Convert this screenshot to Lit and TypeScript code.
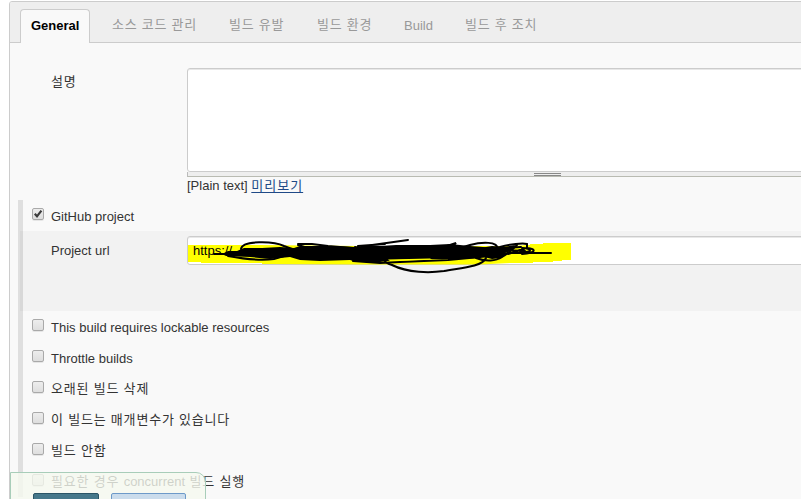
import { LitElement, html, css, svg } from "lit";
import { customElement, property } from "lit/decorators.js";

@customElement("check-row")
class CheckRow extends LitElement {
  @property() label = "";
  @property({ type: Boolean }) checked = false;

  static styles = css`
    :host { display: flex; height: 31px; padding-left: 14px; box-sizing: border-box; }
    .box {
      width: 12px; height: 12px; box-sizing: border-box; flex: none; margin-top: 8px;
      border: 1px solid #a9a9a9; border-radius: 2px;
      background: linear-gradient(#ededed, #dedede);
      box-shadow: 0 1px 0 rgba(0, 0, 0, 0.08);
    }
    .box svg { display: block; width: 10px; height: 10px; overflow: visible; }
    .label { margin-left: 7px; line-height: 34px; white-space: pre; }
    .label.mixed { line-height: 32px; }
    .ko { letter-spacing: 0.8px; }
  `;

  render() {
    const parts = this.label.split(/([A-Za-z]+(?: [A-Za-z]+)*)/).filter((p) => p);
    const mixed = /[가-힣]/.test(this.label);
    return html`<span class="box">${this.checked
        ? html`<svg viewBox="0 0 10 10"><path d="M1.8 4.8 L4 7.3 L8.4 1.6" fill="none" stroke="#3c3c3c" stroke-width="2.2"/></svg>`
        : ""}</span>
      <span class="label ${mixed ? "mixed" : ""}">${parts.map((p) => html`<span class="${/[A-Za-z]/.test(p) ? "" : "ko"}">${p}</span>`)}</span>`;
  }
}

@customElement("app-root")
class AppRoot extends LitElement {
  static styles = css`
    :host {
      display: block; position: relative; width: 801px; height: 499px; overflow: hidden;
      box-sizing: border-box; padding: 1px 0 0 9px; background: #fff; color: #333;
      font: 13px "Liberation Sans", "Noto Sans CJK KR", sans-serif;
    }
    .panel {
      width: 820px; height: 520px; box-sizing: border-box; background: #f9f9f9;
      border: 1px solid #ccc; border-radius: 3px 0 0 0; overflow: hidden;
    }
    .tabs {
      display: flex; height: 41px; box-sizing: border-box; padding: 7px 0 0 10px;
      background: #eee; border-bottom: 1px solid #ccc;
    }
    .tab { height: 33px; line-height: 32px; color: #999; white-space: nowrap; flex: none; box-sizing: border-box; }
    .tab.active {
      width: 70px; height: 34px; padding-left: 10px; color: #000; font-weight: bold; line-height: 31px;
      background: #f9f9f9; border: 1px solid #ccc; border-bottom: 0; border-radius: 4px 4px 0 0; margin-right: 22px;
    }
    .ko { letter-spacing: 0.75px; }
    .t1 { width: 117px; } .t2 { width: 88px; } .t3 { width: 87px; } .t4 { width: 61px; line-height: 33px; }
    .field { display: flex; }
    .desc { height: 157px; padding-top: 25px; box-sizing: border-box; }
    .name { width: 136px; flex: none; white-space: nowrap; }
    .desc .name { margin-left: 41px; line-height: 27px; }
    .area { width: 640px; flex: none; }
    .text { height: 104px; box-sizing: border-box; border: 1px solid #ccc; border-radius: 3px; background: #fff; box-shadow: inset 0 1px 0 #e8e8e8; }
    .grip {
      height: 5px; box-sizing: border-box; background: #eee; border-bottom: 1px solid #b9bbb2; border-left: 1px solid #bbb;
      padding: 1px 0 0 346px;
    }
    .grip i { display: block; width: 27px; height: 3px; box-sizing: border-box; border: solid #888; border-width: 1px 0; }
    .hint { line-height: 18px; white-space: nowrap; }
    .link { color: #204a87; text-decoration: underline; text-underline-offset: 2px; letter-spacing: 1px; }
    .group { margin-left: 8px; height: 297px; box-sizing: border-box; border-left: 5px solid #dfdfdf; }
    .group check-row { padding-left: 9px; }
    .project { height: 80px; padding: 5px 0 0 31px; margin-left: -3px; box-sizing: border-box; background: rgba(0, 0, 0, 0.028); }
    .project .name { line-height: 29px; }
    .input {
      position: relative; width: 640px; height: 29px; box-sizing: border-box; flex: none; border: 1px solid #ccc; border-radius: 3px;
      background: #fff; box-shadow: inset 0 1px 0 #e8e8e8; color: #000; line-height: 28px; padding-left: 5px;
    }
    .marks { position: absolute; left: -8px; top: -7px; width: 400px; height: 50px; }
    .url { position: relative; }
    .actions {
      position: absolute; left: 10px; top: 472px; width: 196px; height: 40px; box-sizing: border-box;
      border: 1px solid #a8cdb9; border-radius: 0 10px 0 0; background: rgba(245, 249, 239, 0.8);
      display: flex; gap: 12px; padding: 20px 0 0 22px;
    }
    .btn { width: 66px; height: 30px; box-sizing: border-box; border: 1px solid #2b5566; border-radius: 2px; background: #46788a; }
    .btn.alt { width: 75px; border-color: #6d9ac9; background: #cadcec; }
  `;

  private ink = svg`
    <path fill="#ff0" d="M8 15 H80 L180 16 L330 16 L350 15 V14 H363 V13 H391 V30 H382 V31 H373 V32 H353 V33 H330 L300 34.5 H180 L82 34 V33 H21 V32 H8 Z"/>`;

  private scribble = svg`
    <path d="M42 24 L48 21 L57 21 L64 18 L82 18 L100 17 L114 18 L120 16 L135 16 L156 16 L175 17 L188 15 L200 16 L216 15 L238 15 L250 15 L270 14 L290 16 L303 17 L312 18 L310 27 L300 28 L280 29 L250 29 L215 30 L200 32 L176 32 L170 30 L140 31 L120 30 L110 27 L100 28 L90 29 L70 27 L46 26 Z"/>
    <path d="M300 18 L312 16 L324 17 L335 15 L333 20 L325 23 L322 28 L312 29 L304 27 Z"/>
    <g fill="none" stroke="#000" stroke-width="2" stroke-linecap="round">
      <path d="M61 19 C62 10 94 11 104 16 L112 19 M34 24 H44 M48 26 C64 29 80 31 94 29 L104 26"/>
      <path d="M118 14 L132 14 L148 16 L172 18 M118 15 L128 18 M186 20 L175 17 M185 16 L228 10 M205 14 L178 16"/>
      <path d="M203 28 C204 31 208 34 212 35 C228 43 250 43 264 41 C280 38 302 37 306 28"/>
      <path d="M267 16 L276 13 L271 18 M262 18 L275 14 M280 18 L290 15 C301 12 319 11 317 19"/>
      <path d="M308 20 L320 17 C330 14 343 13 347 14 V18 C357 19 356 23 342 24 M342 18 C352 18 354 23 340 22"/>
      <path d="M296 28 C306 32 316 31 322 27 C329 23 334 18 337 15 M318 24 L331 23 H371"/>
      <path d="M323 20 L345 21 M325 18 L341 17 M328 24 L344 19"/>
      <path d="M173 31 L200 33 L220 32 L268 30 L300 27"/>
    </g>
    <path d="M208 29.5 L250 28.5 L252 29.5 L210 31 Z" fill="#ff0"/>`;

  render() {
    return html`
      <div class="panel">
        <div class="tabs">
          <div class="tab active">General</div>
          <div class="tab ko t1">소스 코드 관리</div>
          <div class="tab ko t2">빌드 유발</div>
          <div class="tab ko t3">빌드 환경</div>
          <div class="tab t4">Build</div>
          <div class="tab ko">빌드 후 조치</div>
        </div>
        <div class="field desc">
          <div class="name ko">설명</div>
          <div class="area">
            <div class="text"></div>
            <div class="grip"><i></i></div>
            <div class="hint">[Plain text] <span class="link">미리보기</span></div>
          </div>
        </div>
        <div class="group">
          <check-row label="GitHub project" checked></check-row>
          <div class="field project">
            <div class="name">Project url</div>
            <div class="input">
              <svg class="marks" viewBox="0 0 400 50">${this.ink}</svg>
              <span class="url">https://</span>
              <svg class="marks" viewBox="0 0 400 50">${this.scribble}</svg>
            </div>
          </div>
          <check-row label="This build requires lockable resources"></check-row>
          <check-row label="Throttle builds"></check-row>
          <check-row label="오래된 빌드 삭제"></check-row>
          <check-row label="이 빌드는 매개변수가 있습니다"></check-row>
          <check-row label="빌드 안함"></check-row>
          <check-row label="필요한 경우 concurrent 빌드 실행"></check-row>
        </div>
      </div>
      <div class="actions"><span class="btn"></span><span class="btn alt"></span></div>
    `;
  }
}
